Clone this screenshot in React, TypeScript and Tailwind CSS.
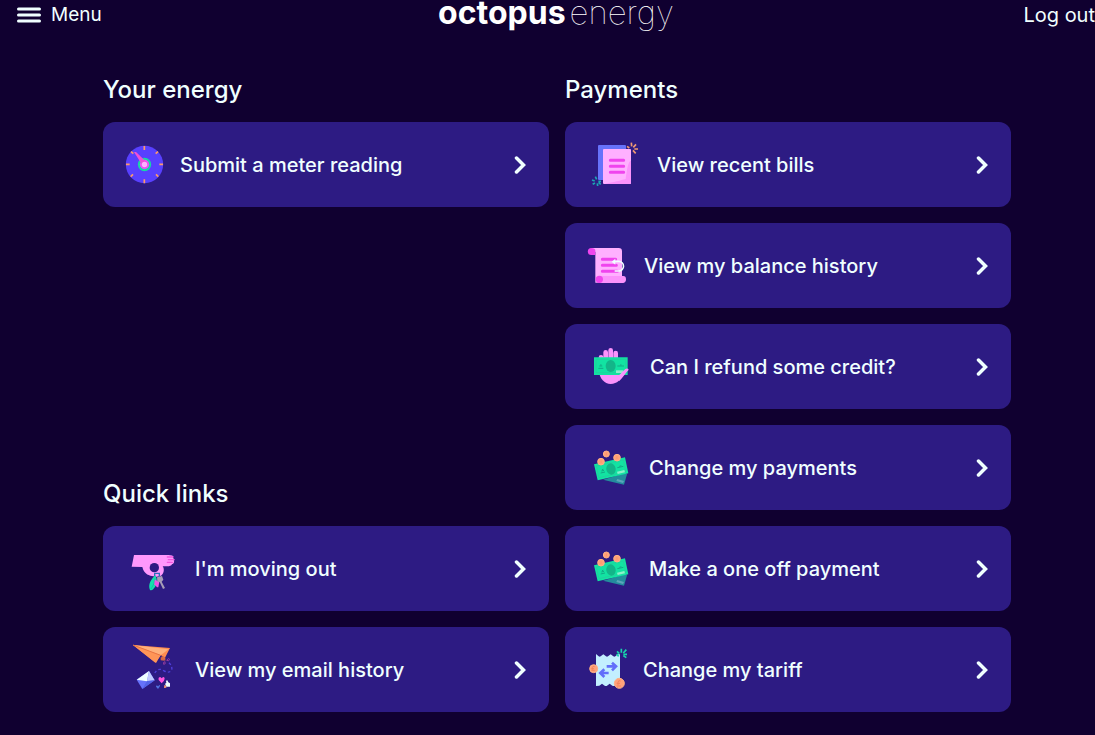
import type { ReactNode } from "react";

function Gauge() {
  return (
    <svg width="45" height="61" viewBox="27 12 135 183" aria-hidden="true">
      <circle cx="103.5" cy="103.5" r="56" fill="#5840ff" />
      <g stroke="#ff9a66" strokeWidth="5">
        <path d="M103 48v12M103 148v12M48 103h11M148 103h11M63 65l7 6M137 71l7-6M62 140l7-7M138 133l7 7" />
      </g>
      <circle cx="103.5" cy="103.5" r="20" fill="#15d9a6" />
      <circle cx="103.5" cy="103.5" r="14" fill="#f050f8" />
      <path d="M72 66l6 0 35 34-12 12z" fill="#f050d8" />
      <circle cx="103.5" cy="103.5" r="8" fill="#ffb3ff" />
    </svg>
  );
}

function Bills() {
  return (
    <svg width="60" height="61" viewBox="3 12 180 183" aria-hidden="true">
      <rect x="54" y="45" width="84" height="105" rx="3" fill="#6672fa" />
      <rect x="69" y="57" width="84" height="105" rx="3" fill="#ffb0ff" />
      <path d="M153 92c-8 0-12 26-16 55-14 4-36 9-65 15h78q3 0 3-3z" fill="#fb92fb" />
      <path d="M91 91h40M91 109h40M91 127h40" stroke="#f044ee" strokeWidth="9" strokeLinecap="round" />
      <path d="M141 49l7 5M154 38l1 11M168 43l-8 9M163 57h11M159 61l8 9" stroke="#f09a72" strokeWidth="5" />
      <path d="M36 150l8 3M46 140l4 8M55 154h8M38 163l7-4M52 160l1 8M56 157l6 6" stroke="#1ba6b4" strokeWidth="5" />
    </svg>
  );
}

function Scroll() {
  return (
    <svg width="47" height="61" viewBox="3 9 141 183" aria-hidden="true">
      <path d="M34 48h82q10 0 10 10v94H46V60z" fill="#ffb0ff" />
      <path d="M34 48a10.5 10.5 0 000 21h12V56q0-8-12-8z" fill="#f044ee" />
      <path d="M58 132h72q8 0 8 10t-8 11H58z" fill="#fb92fb" />
      <circle cx="58" cy="142" r="11" fill="#f044ee" />
      <path d="M67 82h40M67 100h42M67 118h45" stroke="#f044ee" strokeWidth="9" strokeLinecap="round" />
      <path d="M102 88h14a14.5 14.5 0 010 29h-12" fill="none" stroke="#efffff" strokeWidth="5" />
      <path d="M106 80L95 89l11 9z" fill="#efffff" />
    </svg>
  );
}

function HandNote() {
  return (
    <svg width="53" height="61" viewBox="3 9 159 183" aria-hidden="true">
      <g stroke="#fb92fb" strokeWidth="14" strokeLinecap="round">
        <path d="M63 73v20M77 58v30M92 52v35M107 60v30" />
      </g>
      <path d="M57 115c2 22 16 38 35 38 20 0 31-15 37-26z" fill="#fb92fb" />
      <path d="M42 73h101v53H42z" fill="#12e3a2" />
      <path d="M48 79h89v40H48z" fill="none" stroke="#27c99b" strokeWidth="2" />
      <ellipse cx="92" cy="99" rx="15" ry="18" fill="#13b589" />
      <path d="M55 106h15M58 99l9 0M60 96h5M112 99h20M120 96h5" stroke="#13a987" strokeWidth="3" />
      <path d="M108 112h22v8h-22z" fill="#8df0cb" />
      <path d="M108 133c12-6 18-17 28-25 5-4 12-1 9 4-9 8-15 21-27 32z" fill="#fb92fb" />
    </svg>
  );
}

function NotesCoins() {
  return (
    <svg width="52" height="61" viewBox="3 9 156 183" aria-hidden="true">
      <path d="M69 137l67-20 5 4-9 31z" fill="#238c9d" />
      <path d="M112 135l20 6-3 6-20-6z" fill="#5ba6ba" />
      <path d="M42 91l93-21 10 48-92 21z" fill="#12e3a2" />
      <path d="M49 96l81-18 7 35-80 18z" fill="none" stroke="#27c99b" strokeWidth="2" />
      <ellipse cx="93" cy="105" rx="14" ry="17" transform="rotate(-12 93 105)" fill="#13b589" />
      <path d="M62 117l13-3M64 111l8-2M66 107l4-1M112 101l18-4M118 97l6-2" stroke="#13a987" strokeWidth="3" />
      <path d="M111 113l22-5 2 7-22 5z" fill="#8df0cb" />
      <g fill="#ffa27a" stroke="#ffb184" strokeWidth="3">
        <circle cx="79" cy="60" r="9" />
        <circle cx="63" cy="83" r="10" />
        <circle cx="111" cy="71" r="10" />
      </g>
      <path d="M79 56v8M63 79v8M111 67v8" stroke="#ff9468" strokeWidth="3" />
    </svg>
  );
}

function Tariff() {
  return (
    <svg width="46" height="61" viewBox="3 9 138 183" aria-hidden="true">
      <path d="M48 54l8 7q3 2 6 0l8-6 8 6q3 2 6 0l8-6 8 6q3 2 6 0l8-6 6 0v93l-7-5-10 7q-3 1-6-1l-8-6-9 7q-3 1-6-1l-8-6-8 6-10 1z" fill="#c3efff" />
      <path d="M80 91h26M96 80l12 11-12 12M86 111H61M73 100l-12 11 12 12" fill="none" stroke="#626efa" strokeWidth="8" />
      <path d="M110 54l6 7M111 46l7 7M124 38v12M139 41l-9 10M130 55h11M130 59l9 6" stroke="#18d5ac" strokeWidth="5" />
      <g fill="#ffa27a" stroke="#ffb184" strokeWidth="3">
        <circle cx="41" cy="98" r="12" />
        <circle cx="118" cy="142" r="15" />
      </g>
      <path d="M44 92q-6-3-7 3v6M34 103h10M34 98h8" fill="none" stroke="#f4855c" strokeWidth="3" />
      <path d="M122 135q-7-4-8 4v9M110 150h13M110 142h10" fill="none" stroke="#f4855c" strokeWidth="3" />
    </svg>
  );
}

function HandKeys() {
  return (
    <svg width="60" height="61" viewBox="12 9 180 183" aria-hidden="true">
      <path d="M57 60h103q15 0 16 6l-3 3q6 1 5 6l-2 2q3 3 0 7-1 3-5 4-3 6-15 6h-13c6 8 4 23-5 28l-13 3-19-3c-14-4-20-12-24-26l-32-1z" fill="#ff98fc" />
      <path d="M157 66h16M160 74h17M157 82h15" stroke="#f055df" strokeWidth="4" strokeLinecap="round" />
      <circle cx="118" cy="98" r="14" fill="#2d1b83" />
      <path d="M119 127v-12h14v15" fill="none" stroke="#2d6fba" strokeWidth="4" />
      <path d="M121 121c6 12 6 26-1 35-4 5-9 12-15 9-7-15 3-33 16-44z" fill="#14e0ad" />
      <path d="M120 130q-1 17-12 32" fill="none" stroke="#14b797" strokeWidth="2" />
      <path d="M119 134l14 6-3 17-4 0-8-9z" fill="#ef55e7" />
      <path d="M126 127l15-4 4 11-5 6 10 19-6 3-10-21-7-1z" fill="#a69cb6" />
    </svg>
  );
}

function PaperPlane() {
  return (
    <svg width="60" height="61" viewBox="12 12 180 183" aria-hidden="true">
      <path d="M137 76v-9l12-2v12z" fill="#d76645" />
      <path d="M54 30l111 9-15 29-13-8-16 23z" fill="#ff8c50" />
      <path d="M54 30l107 13-24 18z" fill="#ffb17b" />
      <path d="M54 30l83 31-14 23z" fill="#ff9557" />
      <path d="M54 30l83 31" stroke="#e97443" strokeWidth="3" />
      <path d="M137 61l14 7v9z" fill="#e36d41" />
      <path d="M155 76q5-9 9-3-2 7-9 3zM150 80q-7 1-4 8 7 1 4-8z" fill="none" stroke="#913b9c" strokeWidth="3" />
      <path d="M162 83q11 11 8 22-8 12-24 2-17-12-29 11" fill="none" stroke="#5040dc" strokeWidth="4" strokeDasharray="8 7" />
      <path d="M65 134l37-26 17 28-37 26z" fill="#6672fa" />
      <path d="M65 134l37-26-6 31z" fill="#efffff" />
      <path d="M102 108l17 28-23 3z" fill="#c0caff" />
      <path d="M82 162l14-24 23-2z" fill="#5264e7" />
      <path d="M140 145l-9-10q-2-9 5-9l4 4q8-8 9 1 0 5-9 14z" fill="#ff54df" />
      <path d="M129 162l-6-7q0-5 4-3l3 2q3-6 5-3 1 4-6 11z" fill="#5170dd" />
      <path d="M154 155l-4-9 4-2-1-7 4-1 3 6 5 3v10z" fill="#efffff" />
      <path d="M148 150l6 2v6l-7 1z" fill="#f59a78" />
    </svg>
  );
}

function Chevron() {
  return (
    <svg className="shrink-0" width="12" height="18" viewBox="0 0 12 18" fill="none" aria-hidden="true">
      <path d="M2.5 2l7 7-7 7" stroke="#f0ffff" strokeWidth="3.5" strokeLinecap="round" />
    </svg>
  );
}

function Card({ icon, children }: { icon: ReactNode; children: ReactNode }) {
  return (
    <a
      href="#"
      className="flex h-[85px] items-center gap-4 rounded-xl bg-[#2d1b83] pr-[23px] pl-4 text-xl font-medium text-[#f0ffff]"
    >
      <span className="shrink-0">{icon}</span>
      <span className="flex-1">{children}</span>
      <Chevron />
    </a>
  );
}

function Section({ title, children }: { title: string; children: ReactNode }) {
  return (
    <section>
      <h2 className="mb-4 text-2xl leading-8 font-medium">{title}</h2>
      <div className="flex flex-col gap-4">{children}</div>
    </section>
  );
}

export default function App() {
  return (
    <div className="min-h-screen overflow-x-hidden bg-[#100030] font-['Inter',sans-serif] text-[#f0ffff]">
      <header className="grid h-[30px] grid-cols-[1fr_auto_1fr] items-center pl-[17px]">
        <button type="button" className="flex items-center gap-[10px] text-[19px]">
          <svg width="24" height="16" viewBox="0 0 24 16" aria-hidden="true">
            <path d="M1.5 2h21M1.5 8h21M1.5 14h21" stroke="#f0ffff" strokeWidth="3" strokeLinecap="round" />
          </svg>
          Menu
        </button>
        <a href="#" className="flex items-baseline gap-1 self-start text-[32px] leading-6 text-white">
          <span className="font-bold">octopus</span>
          <span className="text-[33px] font-thin">energy</span>
        </a>
        <a href="#" className="justify-self-end text-xl whitespace-nowrap">
          Log out
        </a>
      </header>
      <main className="grid grid-cols-2 gap-4 pt-11 pr-[84px] pb-[23px] pl-[103px]">
        <div className="flex flex-col justify-between">
          <Section title="Your energy">
            <Card icon={<Gauge />}>Submit a meter reading</Card>
          </Section>
          <Section title="Quick links">
            <Card icon={<HandKeys />}>I'm moving out</Card>
            <Card icon={<PaperPlane />}>View my email history</Card>
          </Section>
        </div>
        <Section title="Payments">
          <Card icon={<Bills />}>View recent bills</Card>
          <Card icon={<Scroll />}>View my balance history</Card>
          <Card icon={<HandNote />}>Can I refund some credit?</Card>
          <Card icon={<NotesCoins />}>Change my payments</Card>
          <Card icon={<NotesCoins />}>Make a one off payment</Card>
          <Card icon={<Tariff />}>Change my tariff</Card>
        </Section>
      </main>
    </div>
  );
}
